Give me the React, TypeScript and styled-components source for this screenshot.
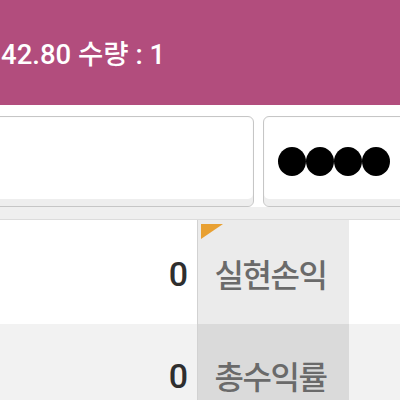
import React from "react";
import styled, { createGlobalStyle } from "styled-components";

const Global = createGlobalStyle`
  html, body { margin: 0; padding: 0; background: #ffffff; }
  body { font-family: Roboto, "Noto Sans CJK KR", sans-serif; }
`;

const Page = styled.div`
  width: 400px;
  height: 400px;
  overflow: hidden;
  background: #ffffff;
  display: flex;
  flex-direction: column;
`;

const Header = styled.header`
  height: 105px;
  flex: none;
  background: #b24d7d;
  display: flex;
  align-items: center;
  padding: 4px 0 0 1px;
  box-sizing: border-box;
  color: #ffffff;
  font-family: Roboto, "Noto Sans CJK KR", sans-serif;
  font-size: 27.5px;
  line-height: 27px;
  font-weight: 500;
  white-space: nowrap;
`;

const Form = styled.section`
  flex: none;
  background: #ffffff;
  padding-top: 11px;
`;

const InputRow = styled.div`
  display: flex;
  gap: 9px;
  margin-left: -20px;
`;

const Field = styled.div<{ $w: number }>`
  flex: none;
  width: ${(p) => p.$w}px;
  height: 91px;
  box-sizing: border-box;
  border: 1px solid #c6c6c6;
  border-radius: 6px;
  background: #ffffff;
  box-shadow: inset 0 -7px 0 #eeeeee, inset 0 0 2px rgba(0, 0, 0, 0.05);
  display: flex;
  align-items: center;
  padding-left: 14px;
`;

const Dot = styled.span`
  display: block;
  width: 28px;
  height: 29px;
  border-radius: 50%;
  background: #000000;
`;

const Band = styled.div`
  height: 12px;
  background: #efefef;
  border-bottom: 1px solid #dcdcdc;
`;

const Row = styled.div<{ $h: number; $bg: string }>`
  flex: none;
  height: ${(p) => p.$h}px;
  background: ${(p) => p.$bg};
  display: grid;
  grid-template-columns: 197px 152px 1fr;
`;

const ValueCell = styled.div<{ $top: number }>`
  display: flex;
  align-items: center;
  justify-content: flex-end;
  padding: ${(p) => p.$top}px 9px 0 0;
  font-family: Roboto, sans-serif;
  font-size: 34px;
  line-height: 34px;
  font-weight: 500;
  color: #2e2e2e;
`;

const LabelCell = styled.div<{ $top: number; $bg: string }>`
  position: relative;
  display: flex;
  align-items: center;
  justify-content: center;
  border-left: 1px solid #d2d2d2;
  background: ${(p) => p.$bg};
  padding: ${(p) => p.$top}px 6px 0 0;
  font-family: "Noto Sans CJK KR", sans-serif;
  font-size: 32px;
  line-height: 32px;
  font-weight: 500;
  letter-spacing: -1.5px;
  color: #6a6a6a;
`;

const Corner = styled.span`
  position: absolute;
  top: 4px;
  left: 3px;
  width: 0;
  height: 0;
  border-top: 15px solid #e8a032;
  border-right: 22px solid transparent;
`;

export default function App() {
  return (
    <>
      <Global />
      <Page>
        <Header>42.80 수량 : 1</Header>
        <Form>
          <InputRow>
            <Field $w={274} />
            <Field $w={170}>
              <Dot />
              <Dot />
              <Dot />
              <Dot />
            </Field>
          </InputRow>
          <Band />
        </Form>
        <Row $h={104} $bg="#ffffff">
          <ValueCell $top={3}>0</ValueCell>
          <LabelCell $top={2} $bg="#ebebeb">
            <Corner />
            실현손익
          </LabelCell>
          <div />
        </Row>
        <Row $h={76} $bg="#f2f2f2">
          <ValueCell $top={27}>0</ValueCell>
          <LabelCell $top={26} $bg="#dadada">
            총수익률
          </LabelCell>
          <div />
        </Row>
      </Page>
    </>
  );
}
